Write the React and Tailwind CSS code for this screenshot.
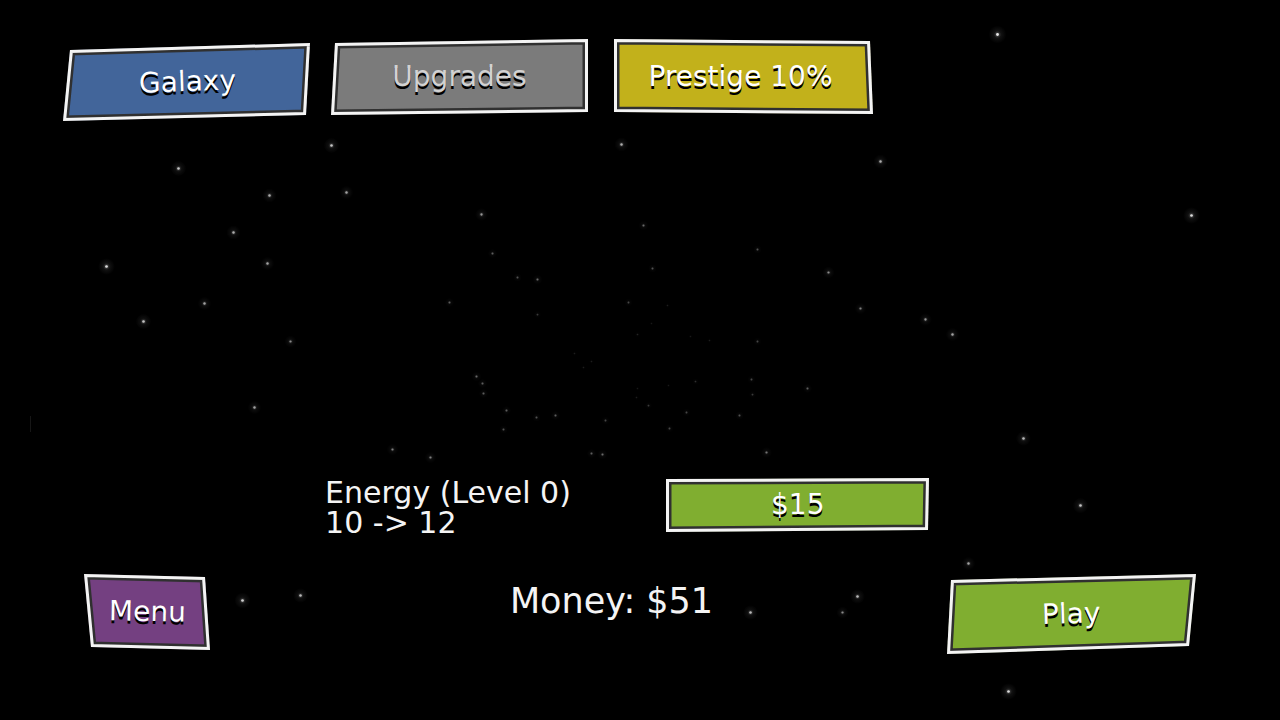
import React, { useId } from "react";

// [x, y, brightness]
const STARS = [
  [997, 34, 1], [1191, 215, 0.95], [880, 161, 0.75], [621, 144, 0.75], [331, 145, 0.85],
  [178, 168, 0.85], [269, 195, 0.75], [346, 192, 0.7], [233, 232, 0.75], [267, 263, 0.7],
  [106, 266, 0.95], [204, 303, 0.7], [143, 321, 0.85], [290, 341, 0.6], [254, 407, 0.7],
  [392, 449, 0.55], [430, 457, 0.55], [481, 214, 0.65], [643, 225, 0.45], [492, 253, 0.4],
  [757, 249, 0.35], [652, 268, 0.35], [517, 277, 0.35], [537, 279, 0.45], [828, 272, 0.6],
  [449, 302, 0.4], [860, 308, 0.55], [628, 302, 0.3], [667, 305, 0.12], [537, 314, 0.25],
  [925, 319, 0.65], [952, 334, 0.7], [651, 323, 0.1], [637, 334, 0.15], [690, 336, 0.1],
  [709, 340, 0.12], [757, 341, 0.3], [574, 353, 0.12], [591, 361, 0.12], [583, 367, 0.12],
  [476, 376, 0.45], [482, 383, 0.4], [483, 393, 0.4], [695, 381, 0.2], [668, 385, 0.1],
  [751, 379, 0.3], [752, 394, 0.25], [807, 388, 0.4], [637, 388, 0.1], [636, 397, 0.12],
  [506, 410, 0.4], [536, 417, 0.35], [555, 415, 0.4], [648, 405, 0.25], [686, 412, 0.3],
  [739, 415, 0.35], [605, 420, 0.3], [503, 429, 0.35], [669, 428, 0.3], [591, 453, 0.4],
  [602, 454, 0.45], [766, 452, 0.5], [1023, 438, 0.8], [1080, 505, 0.85], [968, 563, 0.7],
  [242, 600, 0.9], [300, 595, 0.8], [750, 612, 0.8], [842, 612, 0.6], [857, 596, 0.8],
  [1008, 691, 0.95],
];

function Starfield() {
  const glow = useId();
  return (
    <svg
      aria-hidden="true"
      viewBox="0 0 1280 720"
      preserveAspectRatio="xMidYMid slice"
      className="pointer-events-none absolute inset-0 h-full w-full"
    >
      <defs>
        <radialGradient id={glow}>
          <stop offset="0" stopColor="#fff" stopOpacity="0.35" />
          <stop offset="0.4" stopColor="#fff" stopOpacity="0.07" />
          <stop offset="1" stopColor="#fff" stopOpacity="0" />
        </radialGradient>
      </defs>
      {STARS.map(([x, y, b]) => (
        <g key={`${x}-${y}`} opacity={b}>
          <circle cx={x + 0.5} cy={y + 0.5} r={2 + b * 7} fill={`url(#${glow})`} />
          <circle cx={x + 0.5} cy={y + 0.5} r={0.7 + b * 0.7} fill="#e8e8e8" />
        </g>
      ))}
      <rect x="30" y="416" width="1" height="16" fill="#161616" />
    </svg>
  );
}

// Button seen in perspective: the plate is a four-cornered shape, given in the
// button's own pixels, with a white frame and a dark line inside it.
function PlateButton({ points, width, height, color, className, labelClass = "text-white", children }) {
  const clip = useId();
  return (
    <button
      type="button"
      className={`relative flex shrink-0 cursor-pointer items-center justify-center ${className}`}
    >
      <svg
        aria-hidden="true"
        viewBox={`0 0 ${width} ${height}`}
        preserveAspectRatio="none"
        className="absolute inset-0 h-full w-full"
      >
        <clipPath id={clip}>
          <polygon points={points} />
        </clipPath>
        <g clipPath={`url(#${clip})`} strokeLinejoin="miter">
          <polygon points={points} fill={color} stroke="#303030" strokeWidth="11" />
          <polygon points={points} fill="none" stroke="#f4f4f4" strokeWidth="6" />
        </g>
      </svg>
      <span className={`relative text-[28px] leading-8 [text-shadow:0_3px_0_#000] ${labelClass}`}>
        {children}
      </span>
    </button>
  );
}

export default function App() {
  return (
    <main className="relative flex min-h-screen flex-col overflow-hidden bg-black pt-[39px] pb-[66px] font-['DejaVu_Sans',sans-serif] text-[#f4f4f4]">
      <Starfield />

      <nav className="relative flex items-start gap-5 pl-[63px]">
        <PlateButton
          points="7,7 247,0 243,72 0,78"
          width={248}
          height={78}
          color="#42659a"
          className="mt-1 h-[78px] w-[248px]"
          labelClass="-rotate-2 text-white"
        >
          Galaxy
        </PlateButton>
        <PlateButton
          points="4,4 257,0 257,73 0,76"
          width={257}
          height={76}
          color="#7b7b7b"
          className="h-[76px] w-[257px]"
          labelClass="text-[#d2d2d2]"
        >
          Upgrades
        </PlateButton>
        <PlateButton
          points="6,0 262,2 265,75 6,73"
          width={265}
          height={75}
          color="#c2b11b"
          className="h-[75px] w-[265px]"
        >
          Prestige 10%
        </PlateButton>
      </nav>

      <section className="relative mt-auto ml-[25.4%] flex w-[47.2%] items-start justify-between">
        <div className="text-[30px] leading-[30px] whitespace-nowrap">
          <p>Energy (Level 0)</p>
          <p>10 -&gt; 12</p>
        </div>
        <PlateButton
          points="0,1 263,0 262,52 0,54"
          width={263}
          height={54}
          color="#80ae30"
          className="h-[54px] w-[263px]"
        >
          $15
        </PlateButton>
      </section>

      <footer className="relative mt-9 flex items-start px-[84px]">
        <PlateButton
          points="0,0 121,3 126,76 7,73"
          width={126}
          height={76}
          color="#744081"
          className="h-[76px] w-[126px]"
          labelClass="rotate-1 text-white"
        >
          Menu
        </PlateButton>
        <p className="flex-1 pl-[66px] text-center text-[35px] leading-[54px] whitespace-nowrap">
          Money: $51
        </p>
        <PlateButton
          points="4,6 249,0 242,72 0,80"
          width={249}
          height={80}
          color="#80ae30"
          className="h-20 w-[249px]"
          labelClass="-rotate-2 text-white"
        >
          Play
        </PlateButton>
      </footer>
    </main>
  );
}
